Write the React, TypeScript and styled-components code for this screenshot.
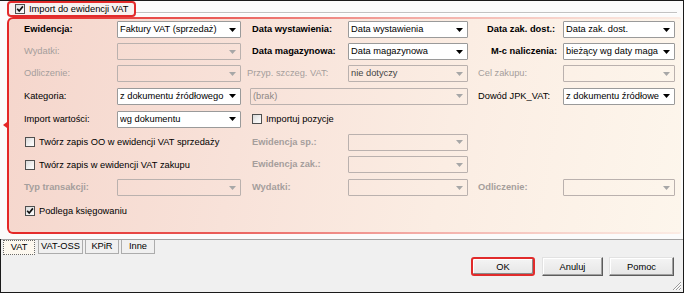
import React from 'react';
import styled, { createGlobalStyle } from 'styled-components';

const Global = createGlobalStyle`
  html, body { margin: 0; padding: 0; background: #fff; }
  body { font-family: "Liberation Sans", Arial, sans-serif; font-size: 9.3px; color: #000; }
  * { box-sizing: border-box; }
`;

const Window = styled.div`
  width: 684px;
  height: 293px;
  border-top: 1px solid #1a1a1a;
  border-right: 1px solid #1a1a1a;
  border-bottom: 1px solid #1a1a1a;
  display: flex;
  flex-direction: column;
  position: relative;
  background: #f0f0f0;
`;

const Upper = styled.div`
  background: #fbfbfb;
  padding: 0 2px 5px 7px;
  display: flex;
  flex-direction: column;
`;

const HeaderRow = styled.div`
  height: 16px;
  display: flex;
  align-items: flex-start;
`;

const HeaderBox = styled.div`
  width: 129px;
  height: 16px;
  border: 2px solid #e22b2b;
  border-radius: 4px;
  background: #f8f1ef;
  display: flex;
  align-items: center;
  gap: 4px;
  padding-left: 6px;
  white-space: nowrap;
`;

const HeaderLine = styled.div`
  flex: 1;
  margin: 11px 4px 0 0;
  height: 2px;
  border-top: 1px solid #c2c2c2;
  border-bottom: 1px solid #ffffff;
`;

const GroupFrame = styled.div`
  position: relative;
  height: 217px;
  padding: 2px 0 2px 2px;
  border-radius: 6px 2px 2px 6px;
  background: linear-gradient(to right, #e42626 0%, #ea5a56 30%, #f3aaa4 60%, #f8d9d1 85%, #fbece4 100%);
  &::before {
    content: '';
    position: absolute;
    left: -4px;
    top: 105px;
    border-right: 4px solid #e42626;
    border-top: 3px solid transparent;
    border-bottom: 3px solid transparent;
  }
`;

const GroupBody = styled.div`
  height: 100%;
  border-radius: 4px 1px 1px 4px;
  background: linear-gradient(100deg, #f5d6cc 0%, #f8e2d9 35%, #fbede3 65%, #fdf6ec 100%);
  padding: 2px 0 0 15px;
`;

const Grid = styled.div`
  display: grid;
  grid-template-columns: 93px 124px 107px 120px 95px 112px;
  grid-template-rows: 22px 22px 22.5px 23px 23px 22.5px 23px 23.5px 17px;
  align-items: start;
`;

const Label = styled.span<{ $bold?: boolean; $dim?: boolean; $indent?: number; $first?: boolean }>`
  ${p => (p.$first ? 'grid-column: 1;' : '')}
  line-height: 17px;
  height: 17px;
  white-space: nowrap;
  padding-left: ${p => p.$indent ?? 0}px;
  font-weight: ${p => (p.$bold ? 700 : 400)};
  color: ${p => (p.$dim ? '#a59e9c' : '#000')};
`;

const Combo = styled.div<{ $disabled?: boolean; $col?: string; $ml?: number }>`
  ${p => (p.$col ? `grid-column: ${p.$col};` : '')}
  margin-left: ${p => p.$ml ?? 0}px;
  height: 17px;
  border: 1px solid ${p => (p.$disabled ? '#bab1ae' : '#9a9a9a')};
  border-radius: 1px;
  background: ${p => (p.$disabled ? 'transparent' : '#ffffff')};
  display: flex;
  align-items: center;
  padding: 0 4px 0 2px;
  overflow: hidden;
`;

const ComboText = styled.span<{ $tone?: 'normal' | 'mid' | 'light' }>`
  flex: 1;
  min-width: 0;
  overflow: hidden;
  white-space: nowrap;
  line-height: 15px;
  color: ${p => (p.$tone === 'mid' ? '#454545' : p.$tone === 'light' ? '#8d8785' : '#000')};
`;

const ArrowSvg = styled.svg`
  flex-shrink: 0;
  margin-left: 2px;
`;

const CheckRow = styled.label<{ $col: string; $ml?: number }>`
  grid-column: ${p => p.$col};
  margin-left: ${p => p.$ml ?? 0}px;
  height: 17px;
  display: flex;
  align-items: center;
  gap: 4px;
  white-space: nowrap;
  color: #000;
`;

const Box = styled.span`
  width: 10px;
  height: 10px;
  flex-shrink: 0;
  border: 1px solid #4f4f4f;
  background: linear-gradient(135deg, #d9d9d9 0%, #f2f2f2 60%, #fdfdfd 100%);
  display: flex;
  align-items: center;
  justify-content: center;
`;

const Lower = styled.div`
  flex: 1;
  border-left: 1px solid #1a1a1a;
  background: #f0f0f0;
  display: flex;
  flex-direction: column;
`;

const TabBar = styled.div`
  border-top: 1px solid #a3a3a3;
  display: flex;
  padding-left: 2px;
  gap: 2px;
`;

const Tab = styled.div<{ $w: number; $active?: boolean }>`
  width: ${p => p.$w}px;
  height: ${p => (p.$active ? 15 : 14)}px;
  margin-right: ${p => (p.$active ? 1 : 0)}px;
  line-height: 13px;
  text-align: center;
  white-space: nowrap;
  border: 1px ${p => (p.$active ? 'dotted #6a6a6a' : 'solid #acacac')};
  border-top: ${p => (p.$active ? '1px dotted #6a6a6a' : 'none')};
  background: ${p => (p.$active ? '#fdf8ef' : '#f0f0f0')};
  color: #000;
`;

const ButtonRow = styled.div`
  margin-top: 2px;
  display: flex;
  justify-content: flex-end;
  padding-right: 9px;
`;

const Button = styled.div<{ $w: number; $ml: number; $hl?: boolean }>`
  width: ${p => p.$w}px;
  height: 19px;
  margin-left: ${p => p.$ml}px;
  display: flex;
  align-items: center;
  justify-content: center;
  color: #000;
  background: linear-gradient(#f4f4f4, #e6e6e6);
  border: ${p => (p.$hl ? '2px solid #e12b2b' : '1px solid')};
  border-color: ${p => (p.$hl ? '#e12b2b' : '#e2e2e2 #5c5c5c #5c5c5c #e2e2e2')};
  border-radius: ${p => (p.$hl ? 3 : 0)}px;
  box-shadow: ${p => (p.$hl ? 'inset -1px -1px #8a8a8a, inset 1px 1px #ffffff' : 'inset -1px -1px #a0a0a0, inset 1px 1px #ffffff')};
`;

const Grip = styled.svg`
  position: absolute;
  right: 1px;
  bottom: 1px;
`;

const Check = ({ checked }: { checked?: boolean }) => (
  <Box>
    {checked && (
      <svg width="8" height="8" viewBox="0 0 8 8">
        <path d="M1.2 3.8 L3.2 6 L6.9 1.4" fill="none" stroke="#111" strokeWidth="1.7" />
      </svg>
    )}
  </Box>
);

type ComboProps = {
  text?: string;
  disabled?: boolean;
  tone?: 'normal' | 'mid' | 'light';
  col?: string;
  ml?: number;
};

const ComboBox = ({ text, disabled, tone, col, ml }: ComboProps) => (
  <Combo $disabled={disabled} $col={col} $ml={ml}>
    <ComboText $tone={tone}>{text ?? ''}</ComboText>
    <ArrowSvg width="7" height="4" viewBox="0 0 7 4">
      <polygon points="0,0 7,0 3.5,4" fill={disabled ? '#a7a7a7' : '#000'} />
    </ArrowSvg>
  </Combo>
);

export default function App() {
  return (
    <>
      <Global />
      <Window>
        <Upper>
          <HeaderRow>
            <HeaderBox>
              <Check checked />
              <span>Import do ewidencji VAT</span>
            </HeaderBox>
            <HeaderLine />
          </HeaderRow>
          <GroupFrame>
            <GroupBody>
              <Grid>
                <Label $first $bold>Ewidencja:</Label>
                <ComboBox text="Faktury VAT (sprzedaż)" />
                <Label $bold $indent={11}>Data wystawienia:</Label>
                <ComboBox text="Data wystawienia" />
                <Label $bold $indent={19}>Data zak. dost.:</Label>
                <ComboBox text="Data zak. dost." />

                <Label $first $dim>Wydatki:</Label>
                <ComboBox disabled />
                <Label $bold $indent={11}>Data magazynowa:</Label>
                <ComboBox text="Data magazynowa" />
                <Label $bold $indent={23}>M-c naliczenia:</Label>
                <ComboBox text="bieżący wg daty maga" />

                <Label $first $dim>Odliczenie:</Label>
                <ComboBox disabled />
                <Label $dim $indent={6}>Przyp. szczeg. VAT:</Label>
                <ComboBox disabled text="nie dotyczy" tone="mid" />
                <Label $dim $indent={10}>Cel zakupu:</Label>
                <ComboBox disabled />

                <Label $first>Kategoria:</Label>
                <ComboBox text="z dokumentu źródłowego" />
                <ComboBox disabled text="(brak)" tone="light" col="3 / 5" ml={9} />
                <Label $indent={10}>Dowód JPK_VAT:</Label>
                <ComboBox text="z dokumentu źródłowe" />

                <Label $first>Import wartości:</Label>
                <ComboBox text="wg dokumentu" />
                <CheckRow $col="3 / 5" $ml={11}>
                  <Check />
                  <span>Importuj pozycje</span>
                </CheckRow>

                <CheckRow $col="1 / 3" $ml={1}>
                  <Check />
                  <span>Twórz zapis OO w ewidencji VAT sprzedaży</span>
                </CheckRow>
                <Label $bold $dim $indent={11}>Ewidencja sp.:</Label>
                <ComboBox disabled />

                <CheckRow $col="1 / 3" $ml={1}>
                  <Check />
                  <span>Twórz zapis w ewidencji VAT zakupu</span>
                </CheckRow>
                <Label $bold $dim $indent={11}>Ewidencja zak.:</Label>
                <ComboBox disabled />

                <Label $first $bold $dim>Typ transakcji:</Label>
                <ComboBox disabled />
                <Label $bold $dim $indent={11}>Wydatki:</Label>
                <ComboBox disabled />
                <Label $bold $dim $indent={10}>Odliczenie:</Label>
                <ComboBox disabled />

                <CheckRow $col="1 / 4" $ml={1}>
                  <Check checked />
                  <span>Podlega księgowaniu</span>
                </CheckRow>
              </Grid>
            </GroupBody>
          </GroupFrame>
        </Upper>
        <Lower>
          <TabBar>
            <Tab $w={32} $active>VAT</Tab>
            <Tab $w={45}>VAT-OSS</Tab>
            <Tab $w={34}>KPiR</Tab>
            <Tab $w={34}>Inne</Tab>
          </TabBar>
          <ButtonRow>
            <Button $w={64} $ml={0} $hl>OK</Button>
            <Button $w={61} $ml={7}>Anuluj</Button>
            <Button $w={65} $ml={6}>Pomoc</Button>
          </ButtonRow>
        </Lower>
        <Grip width="11" height="11" viewBox="0 0 11 11">
          <path d="M10 2 L2 10 M10 5 L5 10 M10 8 L8 10" stroke="#9a9a9a" strokeWidth="1" />
          <path d="M10 3 L3 10 M10 6 L6 10 M10 9 L9 10" stroke="#ffffff" strokeWidth="1" />
        </Grip>
      </Window>
    </>
  );
}
